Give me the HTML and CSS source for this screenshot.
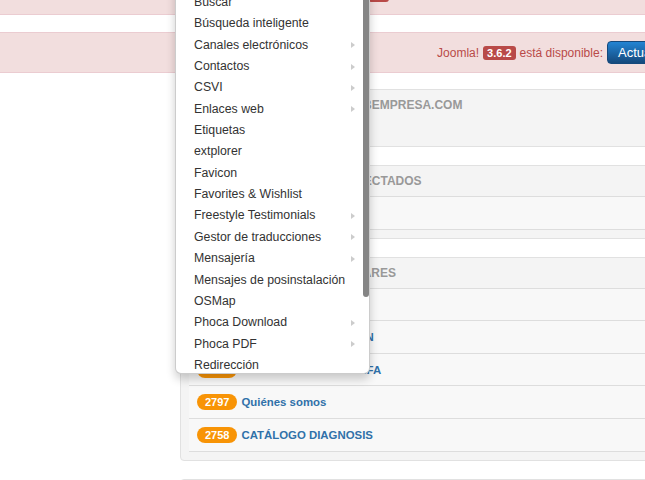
FILE: index.html
```html
<!DOCTYPE html>
<html lang="es">
<head>
    <meta charset="UTF-8">
    <meta name="viewport" content="width=device-width, initial-scale=1.0">
    <title>Panel de control</title>
    <link rel="stylesheet" href="styles.css">
</head>
<body>
    <div class="page">
        <div class="alert alert-top">
            <span>Actualizaciones de extensiones</span>
            <span class="badge badge-important">12</span>
        </div>
        <div class="alert alert-update">
            <span>Joomla!</span>
            <span class="badge badge-important">3.6.2</span>
            <span>está disponible:</span>
            <button class="btn-primary">Actualizar ahora</button>
        </div>

        <div class="content">
            <div class="well">
                <h2 class="nav-header">Noticias del blog webempresa.com</h2>
                <p class="well-text">Sin noticias</p>
            </div>

            <div class="well">
                <h2 class="nav-header">Últimos clientes conectados</h2>
                <div class="list">
                    <div class="list-row"><a class="row-link" href="#">Super Usuario</a></div>
                </div>
            </div>

            <div class="well">
                <h2 class="nav-header">Artículos más populares</h2>
                <div class="list">
                    <div class="list-row"><span class="badge badge-warning">5243</span><a class="row-link" href="#">Inicio</a></div>
                    <div class="list-row"><span class="badge badge-warning">3051</span><a class="row-link" href="#">ÁREAS DE FORMACIÓN</a></div>
                    <div class="list-row"><span class="badge badge-warning">2904</span><a class="row-link" href="#">PRESUPUESTO Y TARIFA</a></div>
                    <div class="list-row"><span class="badge badge-warning">2797</span><a class="row-link" href="#">Quiénes somos</a></div>
                    <div class="list-row"><span class="badge badge-warning">2758</span><a class="row-link" href="#">CATÁLOGO DIAGNOSIS</a></div>
                </div>
            </div>

            <div class="well">
                <h2 class="nav-header">Artículos añadidos recientemente</h2>
            </div>
        </div>
    </div>

    <!-- Components menu, open and scrolled -->
    <div class="dropdown-menu">
        <ul>
            <li>Banners</li>
            <li>Buscar</li>
            <li>Búsqueda inteligente</li>
            <li class="has-sub">Canales electrónicos</li>
            <li class="has-sub">Contactos</li>
            <li class="has-sub">CSVI</li>
            <li class="has-sub">Enlaces web</li>
            <li>Etiquetas</li>
            <li>extplorer</li>
            <li>Favicon</li>
            <li>Favorites &amp; Wishlist</li>
            <li class="has-sub">Freestyle Testimonials</li>
            <li class="has-sub">Gestor de traducciones</li>
            <li class="has-sub">Mensajería</li>
            <li>Mensajes de posinstalación</li>
            <li>OSMap</li>
            <li class="has-sub">Phoca Download</li>
            <li class="has-sub">Phoca PDF</li>
            <li>Redirección</li>
            <li>Sitemap</li>
        </ul>
        <div class="scroll-thumb"></div>
    </div>
</body>
</html>
```

FILE: styles.css
```css
html, body {
    margin: 0;
    overflow: hidden;
}
body {
    font-family: "Liberation Sans", Arial, sans-serif;
    font-size: 12px;
    color: #333;
    background: #fff;
}
.page {
    width: 1160px;
}

/* system messages */
.alert {
    display: flex;
    align-items: center;
    height: 23px;
    padding: 8px 14px;
    border: solid #ebccd1;
    border-width: 1px 0;
    background: #f2dede;
    color: #b94a48;
}
.alert-top {
    margin-top: -26px;
    margin-bottom: 17px;
    padding-left: 197px;
    gap: 4px;
}
.alert-update {
    justify-content: center;
    gap: 4px;
}
.badge {
    display: inline-block;
    font-size: 11px;
    font-weight: bold;
    color: #fff;
    white-space: nowrap;
}
.badge-important {
    padding: 0 4px;
    line-height: 14px;
    border-radius: 3px;
    background: #b94a48;
}
.badge-warning {
    padding: 0 8px;
    line-height: 16px;
    border-radius: 9px;
    background: #f89406;
}
.btn-primary {
    height: 23px;
    padding: 0 10px;
    font-family: "Liberation Sans", Arial, sans-serif;
    font-size: 13px;
    color: #fff;
    border: 1px solid #15497c;
    border-radius: 4px;
    background: linear-gradient(to bottom, #2384d3, #15497c);
    white-space: nowrap;
}

/* cpanel modules */
.content {
    margin-top: 16px;
    padding: 0 180px;
}
.well {
    padding: 7px 8px 8px;
    margin-bottom: 18px;
    background: #f4f4f4;
    border: 1px solid #e1e1e1;
    border-radius: 4px;
}
.nav-header {
    margin: 0 0 7px;
    padding-left: 29px;
    font-size: 12px;
    line-height: 16px;
    font-weight: bold;
    text-transform: uppercase;
    color: #999;
}
.well-text {
    margin: 0;
    padding-left: 8px;
    line-height: 18px;
}
.list {
    background: #f8f8f8;
    border-bottom: 1px solid #ddd;
}
.list-row {
    display: flex;
    align-items: center;
    gap: 4px;
    height: 16px;
    padding: 7.8px 8px;
    border-top: 1px solid #ddd;
}
.row-link {
    font-size: 11.4px;
    font-weight: bold;
    color: #3071a9;
    text-decoration: none;
}

/* dropdown */
.dropdown-menu {
    position: absolute;
    top: -40px;
    left: 175px;
    width: 193px;
    height: 412px;
    overflow: hidden;
    background: #fff;
    border: 1px solid rgba(0, 0, 0, 0.2);
    border-radius: 0 0 6px 6px;
    box-shadow: 0 5px 10px rgba(0, 0, 0, 0.2);
}
.dropdown-menu ul {
    list-style: none;
    margin: 0;
    padding: 9.5px 0 0;
}
.dropdown-menu li {
    display: flex;
    align-items: center;
    justify-content: space-between;
    padding: 0 14px 0 18px;
    font-size: 12.3px;
    line-height: 21.36px;
    color: #333;
    white-space: nowrap;
}
.has-sub::after {
    content: "";
    border-left: 4px solid #ccc;
    border-top: 3.5px solid transparent;
    border-bottom: 3.5px solid transparent;
}
.scroll-thumb {
    position: absolute;
    top: 0;
    right: 0;
    width: 6px;
    height: 336px;
    background: #858585;
    border-radius: 0 0 3px 3px;
}
```
